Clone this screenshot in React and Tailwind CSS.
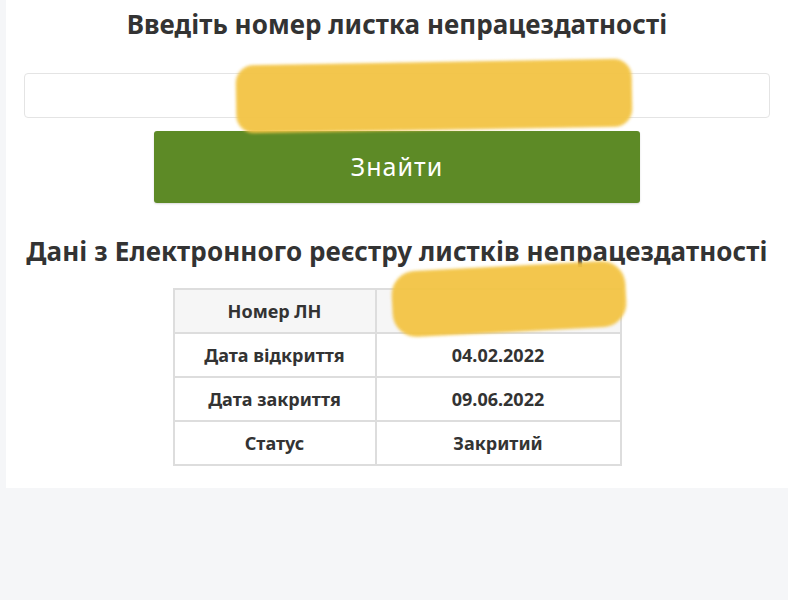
import React from 'react';

const rows = [
  { label: 'Номер ЛН', value: '' },
  { label: 'Дата відкриття', value: '04.02.2022' },
  { label: 'Дата закриття', value: '09.06.2022' },
  { label: 'Статус', value: 'Закритий' },
];

export default function App() {
  return (
    <div className="min-h-[600px] bg-[#f5f6f8] pl-[6px]" style={{ fontFamily: '"Noto Sans", "Open Sans", sans-serif' }}>
      <div className="relative bg-white pb-[22px] text-[#333]">
        {/* search */}
        <h2 className="pt-[6px] text-center text-[26px] font-bold leading-[36px] tracking-[0.05px]">
          Введіть номер листка непрацездатності
        </h2>
        <div className="mt-[31px] px-[18px]">
          <input className="block h-[45px] w-full rounded-[4px] border border-[#e4e4e4] bg-white px-3" />
        </div>
        <div className="mt-[13px] flex justify-center">
          <button className="h-[72px] w-[486px] rounded-[3px] bg-[#5d8a26] text-[25px] tracking-[1px] text-white shadow-[0_1px_2px_rgba(0,0,0,0.15)]">
            Знайти
          </button>
        </div>

        {/* results */}
        <h2 className="mt-[30px] text-center text-[26px] font-bold leading-[36px] tracking-[0.1px]">
          Дані з Електронного реєстру листків непрацездатності
        </h2>
        <div className="mt-[19px] flex justify-center">
          <table className="border-collapse border-2 border-[#dddddd] text-[18px] font-bold">
            <tbody>
              {rows.map((r, i) => (
                <tr key={r.label} className={i === 0 ? 'bg-[#f6f6f6]' : 'bg-white'}>
                  <td className="h-[44px] w-[202px] border-2 border-[#dddddd] p-0 text-center">{r.label}</td>
                  <td className="h-[44px] w-[245px] border-2 border-[#dddddd] p-0 text-center">{r.value}</td>
                </tr>
              ))}
            </tbody>
          </table>
        </div>

        {/* redaction marks */}
        <div className="pointer-events-none absolute left-[230px] top-[62px] h-[68px] w-[396px] -rotate-[1deg] rounded-[18px] bg-[#f3c444] opacity-95 blur-[1.5px]" />
        <div className="pointer-events-none absolute left-[386px] top-[266px] h-[66px] w-[234px] -rotate-[3deg] rounded-[24px] bg-[#f3c444] opacity-95 blur-[1.5px]" />
      </div>
    </div>
  );
}
